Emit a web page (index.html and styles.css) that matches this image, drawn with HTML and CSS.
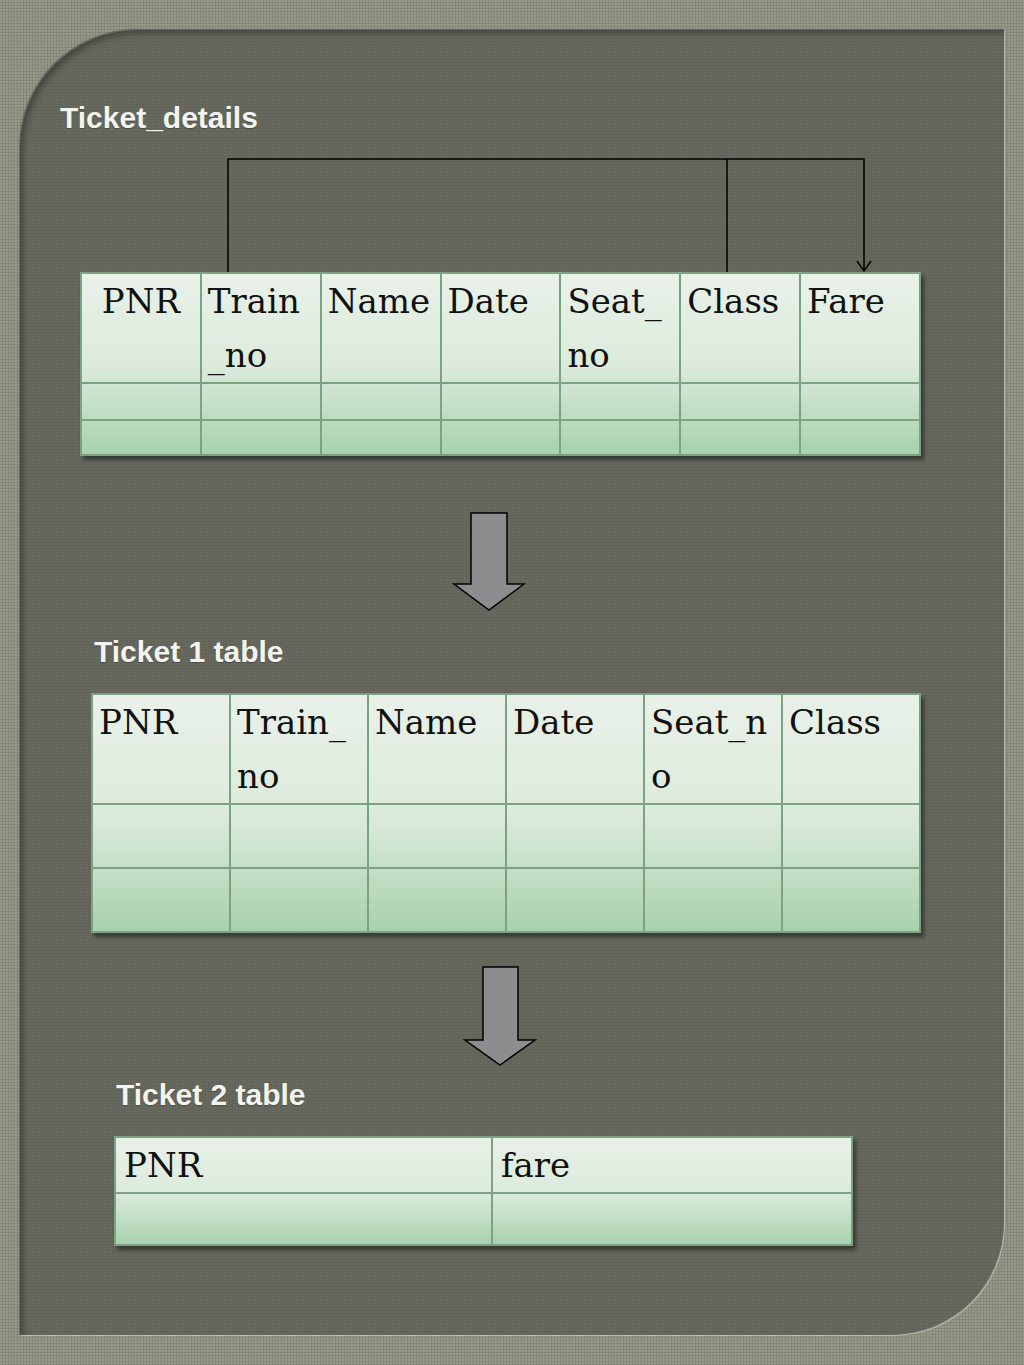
FILE: index.html
```html
<!DOCTYPE html>
<html lang="en">
<head>
<meta charset="utf-8">
<title>Ticket tables</title>
<link rel="stylesheet" href="styles.css">
</head>
<body>
<main class="panel">
  <h2 class="title title-details">Ticket_details</h2>
  <svg class="connector" width="841" height="118" viewBox="0 0 841 118" aria-hidden="true">
    <path d="M148 118 V5 H784 V117" fill="none" stroke="#000" stroke-width="1.5"/>
    <path d="M647 5 V118" fill="none" stroke="#000" stroke-width="1.5"/>
    <path d="M777 107 L784 117 L791 107" fill="none" stroke="#000" stroke-width="1.5"/>
  </svg>
  <table class="grid grid-details">
    <tr class="row-head">
      <td class="center">PNR</td>
      <td>Train<br>_no</td>
      <td>Name</td>
      <td>Date</td>
      <td>Seat_<br>no</td>
      <td>Class</td>
      <td>Fare</td>
    </tr>
    <tr class="row-a"><td></td><td></td><td></td><td></td><td></td><td></td><td></td></tr>
    <tr class="row-b"><td></td><td></td><td></td><td></td><td></td><td></td><td></td></tr>
  </table>

  <svg class="down down-1" width="100" height="110" viewBox="0 0 100 110" aria-hidden="true">
    <path d="M32 7 H68 V78 H85 L50 104 L15 78 H32 Z" fill="#8d8d90" stroke="#000" stroke-width="1.5" stroke-linejoin="miter"/>
  </svg>

  <h2 class="title title-t1">Ticket 1 table</h2>
  <table class="grid grid-t1">
    <tr class="row-head">
      <td>PNR</td>
      <td>Train_<br>no</td>
      <td>Name</td>
      <td>Date</td>
      <td>Seat_n<br>o</td>
      <td>Class</td>
    </tr>
    <tr class="row-c"><td></td><td></td><td></td><td></td><td></td><td></td></tr>
    <tr class="row-c"><td></td><td></td><td></td><td></td><td></td><td></td></tr>
  </table>

  <svg class="down down-2" width="100" height="110" viewBox="0 0 100 110" aria-hidden="true">
    <path d="M33 6 H68 V79 H85 L50 104 L15 79 H33 Z" fill="#8d8d90" stroke="#000" stroke-width="1.5" stroke-linejoin="miter"/>
  </svg>

  <h2 class="title title-t2">Ticket 2 table</h2>
  <table class="grid grid-t2">
    <tr class="row-single">
      <td>PNR</td>
      <td>fare</td>
    </tr>
    <tr class="row-single row-last"><td></td><td></td></tr>
  </table>
</main>
</body>
</html>
```

FILE: styles.css
```css
html, body {
  margin: 0;
  padding: 0;
}

body {
  background-color: #8a8c7c;
  background-image:
    radial-gradient(circle at 1px 1px, rgba(255,255,255,0.10) 0.8px, transparent 1.2px),
    radial-gradient(circle at 2.5px 2.5px, rgba(0,0,0,0.08) 0.8px, transparent 1.2px);
  background-size: 3px 3px, 3px 3px;
  width: 1024px;
  height: 1365px;
  overflow: hidden;
  display: flow-root;
}

.panel {
  box-sizing: border-box;
  margin: 30px 20px;
  height: 1305px;
  padding-top: 70px;
  background-color: #62645a;
  background-image:
    radial-gradient(circle at 1px 1px, rgba(255,255,255,0.04) 0.8px, transparent 1.2px);
  background-size: 3px 3px;
  border-radius: 118px 0 112px 0;
  box-shadow:
    inset 3px 3px 7px rgba(0,0,0,0.35),
    inset -1px -1px 1px rgba(255,255,255,0.08),
    1px 1px 0 rgba(230,232,220,0.45),
    -1px -1px 1px rgba(60,62,52,0.5);
  display: flow-root;
}

.title {
  margin: 0;
  font-family: "Liberation Sans", Arial, sans-serif;
  font-weight: bold;
  font-size: 30px;
  line-height: 36px;
  color: #f4f4ef;
  text-shadow: 0 1px 1px rgba(0,0,0,0.25);
}

.title-details { margin-left: 40px; }
.title-t1 { margin-left: 74px; margin-top: 18px; }
.title-t2 { margin-left: 96px; margin-top: 6px; }

.connector {
  display: block;
  margin-top: 18px;
  margin-left: 60px;
}

.down {
  display: block;
}
.down-1 { margin-top: 50px; margin-left: 419px; }
.down-2 { margin-top: 28px; margin-left: 430px; }

.grid {
  border-collapse: collapse;
  table-layout: fixed;
  background: linear-gradient(to bottom, #e9f1e9 0%, #dcebdc 50%, #c8e1ca 70%, #a7d1ae 100%);
  box-shadow: 3px 4px 4px rgba(0,0,0,0.45);
  font-family: "DejaVu Serif", "Liberation Serif", serif;
  font-size: 34px;
  line-height: 54px;
  color: #111;
}

.grid td {
  border: 2px solid #7ba381;
  padding: 0 0 0 6px;
  vertical-align: top;
  white-space: nowrap;
  overflow: hidden;
}

.grid td.center {
  text-align: center;
  padding-left: 0;
}

.grid-details {
  margin-left: 60px;
  width: 841px;
}
.grid-details .row-head { height: 109px; }
.grid-details .row-a { height: 37px; }
.grid-details .row-b { height: 35px; }

.grid-t1 {
  margin-left: 71px;
  margin-top: 23px;
  width: 830px;
}
.grid-t1 .row-head { height: 108px; }
.grid-t1 .row-c { height: 64px; }

.grid-t2 {
  margin-left: 94px;
  margin-top: 23px;
  width: 739px;
}
.grid-t2 .row-single { height: 53px; }
.grid-t2 .row-last { height: 52px; }
.grid-t2 td { padding-left: 8px; }
.grid-t2 td:first-child { width: 367px; }
```
